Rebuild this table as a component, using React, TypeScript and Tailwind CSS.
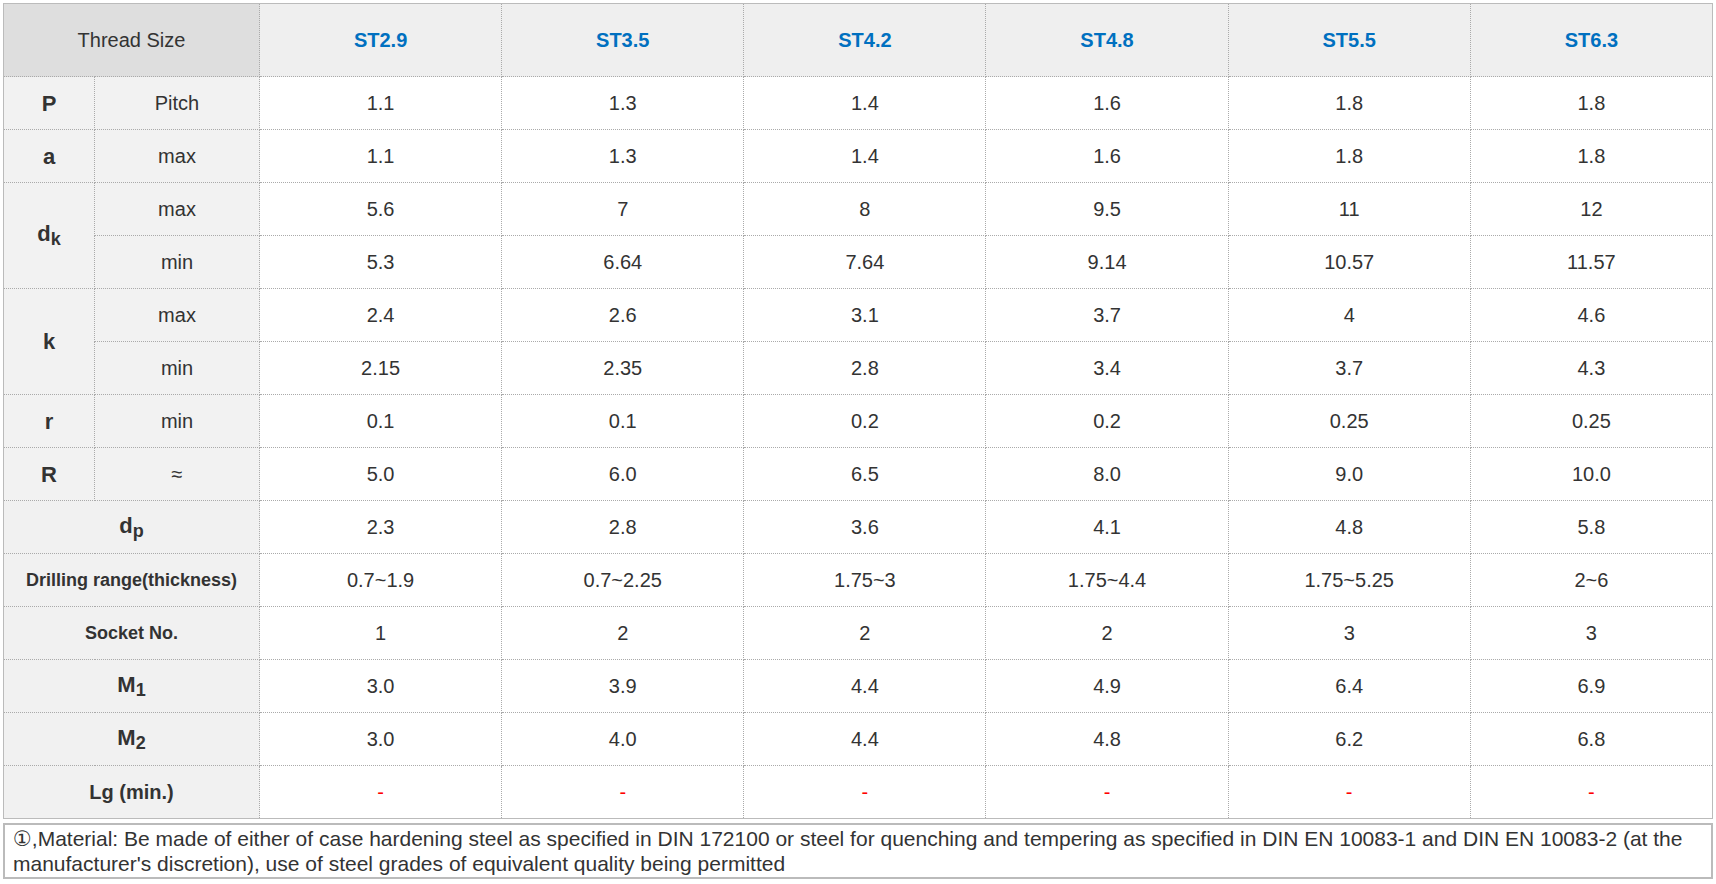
import React from "react";

const cols = ["ST2.9", "ST3.5", "ST4.2", "ST4.8", "ST5.5", "ST6.3"];

type Row = {
  label?: React.ReactNode;
  labelRowSpan?: number;
  sub?: string;
  span2?: boolean;
  values: string[];
  red?: boolean;
};

const Sub = ({ base, sub }: { base: string; sub: string }) => (
  <span className="font-bold text-[22px] leading-none">
    {base}
    <sub className="text-[18px] relative top-[4px] align-baseline">{sub}</sub>
  </span>
);

const rows: Row[] = [
  { label: <span className="font-bold text-[22px]">P</span>, sub: "Pitch", values: ["1.1", "1.3", "1.4", "1.6", "1.8", "1.8"] },
  { label: <span className="font-bold text-[22px]">a</span>, sub: "max", values: ["1.1", "1.3", "1.4", "1.6", "1.8", "1.8"] },
  { label: <Sub base="d" sub="k" />, labelRowSpan: 2, sub: "max", values: ["5.6", "7", "8", "9.5", "11", "12"] },
  { sub: "min", values: ["5.3", "6.64", "7.64", "9.14", "10.57", "11.57"] },
  { label: <span className="font-bold text-[22px]">k</span>, labelRowSpan: 2, sub: "max", values: ["2.4", "2.6", "3.1", "3.7", "4", "4.6"] },
  { sub: "min", values: ["2.15", "2.35", "2.8", "3.4", "3.7", "4.3"] },
  { label: <span className="font-bold text-[22px]">r</span>, sub: "min", values: ["0.1", "0.1", "0.2", "0.2", "0.25", "0.25"] },
  { label: <span className="font-bold text-[22px]">R</span>, sub: "≈", values: ["5.0", "6.0", "6.5", "8.0", "9.0", "10.0"] },
  { label: <Sub base="d" sub="p" />, span2: true, values: ["2.3", "2.8", "3.6", "4.1", "4.8", "5.8"] },
  { label: <span className="font-bold text-[18px]">Drilling range(thickness)</span>, span2: true, values: ["0.7~1.9", "0.7~2.25", "1.75~3", "1.75~4.4", "1.75~5.25", "2~6"] },
  { label: <span className="font-bold text-[18px]">Socket No.</span>, span2: true, values: ["1", "2", "2", "2", "3", "3"] },
  { label: <Sub base="M" sub="1" />, span2: true, values: ["3.0", "3.9", "4.4", "4.9", "6.4", "6.9"] },
  { label: <Sub base="M" sub="2" />, span2: true, values: ["3.0", "4.0", "4.4", "4.8", "6.2", "6.8"] },
  { label: <span className="font-bold text-[20px]">Lg (min.)</span>, span2: true, values: ["-", "-", "-", "-", "-", "-"], red: true },
];

const cell = "border border-dotted border-[#aaaaaa] text-center align-middle p-0";

export default function App() {
  return (
    <div className="p-[3px] bg-white text-[#333333]" style={{ fontFamily: '"Liberation Sans", Arial, "DejaVu Sans", sans-serif' }}>
      <table className="w-[1710px] border-collapse table-fixed border border-solid border-[#bbbbbb]">
        <colgroup>
          <col className="w-[91px]" />
          <col className="w-[165px]" />
          {cols.map((c) => (
            <col key={c} />
          ))}
        </colgroup>
        <tbody>
          <tr className="h-[73px]">
            <td colSpan={2} className={`${cell} bg-[#dedede] text-[20px]`}>Thread Size</td>
            {cols.map((c) => (
              <td key={c} className={`${cell} bg-[#efefef] text-[20px] font-bold text-[#0070c0]`}>{c}</td>
            ))}
          </tr>
          {rows.map((r, i) => (
            <tr key={i} className="h-[53px]">
              {r.span2 ? (
                <td colSpan={2} className={`${cell} bg-[#f1f1f1]`}>{r.label}</td>
              ) : (
                <>
                  {r.label !== undefined && (
                    <td rowSpan={r.labelRowSpan ?? 1} className={`${cell} bg-[#f2f2f2]`}>{r.label}</td>
                  )}
                  <td className={`${cell} bg-[#f2f2f2] text-[20px]`}>{r.sub}</td>
                </>
              )}
              {r.values.map((v, j) => (
                <td key={j} className={`${cell} bg-white text-[20px] ${r.red ? "text-[#ff0000]" : ""}`}>{v}</td>
              ))}
            </tr>
          ))}
        </tbody>
      </table>
      <div className="mt-[4px] w-[1710px] h-[56px] border-2 border-solid border-[#bbbbbb] px-[8px] pt-[1px] text-[21px] leading-[25px]">
        ①,Material: Be made of either of case hardening steel as specified in DIN 172100 or steel for quenching and tempering as specified in DIN EN 10083-1 and DIN EN 10083-2 (at the manufacturer's discretion), use of steel grades of equivalent quality being permitted
      </div>
    </div>
  );
}
